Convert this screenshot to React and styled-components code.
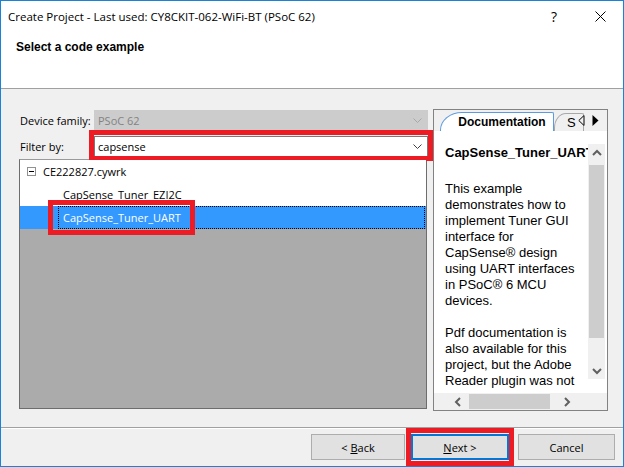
import React from 'react';
import styled, { createGlobalStyle } from 'styled-components';

const GlobalStyle = createGlobalStyle`
  html, body {
    margin: 0;
    padding: 0;
    background: #ffffff;
  }
  body {
    font-family: "Open Sans", "Noto Sans", sans-serif;
    font-size: 11px;
    color: #000;
  }
  * {
    box-sizing: border-box;
  }
`;

const RED = '#ed1c24';

// --- window chrome ---

const Window = styled.div`
  width: 624px;
  height: 467px;
  border: 1px solid #1883d7;
  display: flex;
  flex-direction: column;
  background: #f0f0f0;
  overflow: hidden;
`;

const TitleBar = styled.div`
  height: 30px;
  flex: none;
  background: #fff;
  display: flex;
  align-items: center;
  padding-left: 7px;
`;

const TitleText = styled.div`
  flex: 1;
  font-size: 11.5px;
  white-space: nowrap;
`;

const CaptionButton = styled.div`
  width: 46px;
  height: 30px;
  display: flex;
  align-items: center;
  justify-content: center;
  font-size: 14px;
`;

const Header = styled.div`
  height: 58px;
  flex: none;
  background: #fff;
  border-bottom: 1px solid #a0a0a0;
  padding: 8px 0 0 15px;
`;

const HeaderTitle = styled.div`
  font-family: "Liberation Sans", Arial, sans-serif;
  font-weight: bold;
  font-size: 12px;
  line-height: 16px;
`;

const Body = styled.div`
  height: 338px;
  flex: none;
  display: flex;
  padding: 20px 0 0 18px;
`;

// --- left column ---

const LeftColumn = styled.div`
  width: 414px;
  display: flex;
  flex-direction: column;
`;

const FieldRow = styled.div`
  display: flex;
  align-items: center;
  height: 21px;
  margin-top: ${p => p.$top}px;
`;

const FieldLabel = styled.div`
  width: 75px;
  padding-left: 1px;
  white-space: nowrap;
`;

const Combo = styled.div`
  position: relative;
  width: 334px;
  height: 21px;
  display: flex;
  align-items: center;
  padding: 0 0 0 3px;
  background: ${p => (p.$disabled ? '#cccccc' : '#ffffff')};
  border: 1px solid ${p => (p.$disabled ? '#cccccc' : '#7a7a7a')};
  color: ${p => (p.$disabled ? '#838383' : '#000')};
`;

const ComboValue = styled.span`
  flex: 1;
`;

const ComboArrow = styled.svg`
  width: 9px;
  height: 5px;
  margin-right: 5px;
`;

const Highlight = styled.div`
  position: absolute;
  top: ${p => p.$t}px;
  left: ${p => p.$l}px;
  right: ${p => p.$r}px;
  bottom: ${p => p.$b}px;
  border: 5px solid ${RED};
  pointer-events: none;
`;

const Tree = styled.div`
  margin-top: 2px;
  width: 408px;
  height: 250px;
  background: #ababab;
  border: 1px solid #6d6d6d;
  border-top-color: #9a9a9a;
`;

const TreeRow = styled.div`
  position: relative;
  height: 23px;
  display: flex;
  align-items: center;
  background: ${p => (p.$selected ? '#3399ff' : '#ffffff')};
  color: ${p => (p.$selected ? '#ffffff' : '#000')};
`;

const Expander = styled.span`
  width: 9px;
  height: 9px;
  margin: 0 7px 0 7px;
  border: 1px solid #919191;
  display: flex;
  align-items: center;
  justify-content: center;

  &::after {
    content: '';
    width: 5px;
    height: 1px;
    background: #000;
  }
`;

const NodeLabel = styled.span`
  margin-left: ${p => p.$indent}px;
  white-space: nowrap;
`;

const FocusLabel = styled.span`
  flex: 1;
  align-self: stretch;
  margin: 0 1px 0 38px;
  padding-left: 4px;
  display: flex;
  align-items: center;
  border: 1px dotted #000;
  white-space: nowrap;
`;

// --- right panel ---

const DocPanel = styled.div`
  width: 175px;
  height: 302px;
  border: 1px solid #828282;
  display: flex;
  flex-direction: column;
  background: #f0f0f0;
  overflow: hidden;
`;

const TabStrip = styled.div`
  position: relative;
  height: 21px;
  flex: none;
  display: flex;
  align-items: flex-end;
  padding-left: 6px;
`;

const Tab = styled.div`
  height: ${p => (p.$active ? 19 : 18)}px;
  width: ${p => p.$w}px;
  flex: none;
  display: flex;
  align-items: center;
  justify-content: ${p => (p.$active ? 'center' : 'flex-start')};
  padding-left: ${p => (p.$active ? 10 : 12)}px;
  background: ${p => (p.$active ? '#ffffff' : '#f0f0f0')};
  border: 1px solid ${p => (p.$active ? '#5d9be0' : '#a8a8a8')};
  border-bottom: none;
  border-top-left-radius: ${p => (p.$active ? '22px 18px' : '12px 15px')};
  border-top-right-radius: 2px;
  font-family: "Liberation Sans", Arial, sans-serif;
  font-weight: ${p => (p.$active ? 'bold' : 'normal')};
  font-size: ${p => (p.$active ? 12 : 13)}px;
  overflow: hidden;
  white-space: nowrap;
`;

const TabScroller = styled.div`
  position: absolute;
  right: 8px;
  top: 5px;
  display: flex;
  gap: 7px;
  background: #f0f0f0;
  padding-left: 2px;
`;

const DocArea = styled.div`
  height: 262px;
  flex: none;
  display: flex;
  background: #fff;
  overflow: hidden;
`;

const DocText = styled.div`
  width: 154px;
  height: 262px;
  overflow: hidden;
  padding: 14px 0 0 11px;
  font-family: "Liberation Sans", Arial, sans-serif;
  font-size: 13px;
  line-height: 16px;
  white-space: nowrap;
`;

const DocTitle = styled.div`
  font-weight: bold;
  margin-bottom: 20px;
`;

const DocPara = styled.p`
  margin: 0 0 16px;
`;

const VScroll = styled.div`
  width: 17px;
  margin-top: 13px;
  margin-bottom: 14px;
  display: flex;
  flex-direction: column;
  background: #f0f0f0;
`;

const ScrollButton = styled.div`
  width: 17px;
  height: 17px;
  flex: none;
  display: flex;
  align-items: center;
  justify-content: center;
`;

const VTrack = styled.div`
  flex: 1;
  padding-top: 4px;
`;

const VThumb = styled.div`
  height: 173px;
  margin: 0 1px;
  background: #cdcdcd;
`;

const HScroll = styled.div`
  height: 17px;
  flex: none;
  display: flex;
  padding-left: 15px;
  background: #f0f0f0;
`;

const HTrack = styled.div`
  width: 92px;
  padding: 1px 0 1px 3px;
`;

const HThumb = styled.div`
  width: 81px;
  height: 100%;
  background: #cdcdcd;
`;

// --- footer ---

const Footer = styled.div`
  flex: 1;
  border-top: 1px solid #a0a0a0;
  box-shadow: inset 0 1px 0 #ffffff;
  display: flex;
  justify-content: flex-end;
  align-items: flex-start;
  padding: 6px 8px 0 0;
  gap: 6px;
`;

const ButtonWrap = styled.div`
  position: relative;
  margin-left: ${p => p.$ml || 0}px;
`;

const Button = styled.div`
  width: ${p => p.$w}px;
  height: 26px;
  display: flex;
  align-items: center;
  justify-content: center;
  background: #e1e1e1;
  border: 1px solid ${p => (p.$primary ? '#0078d7' : '#adadad')};
  box-shadow: ${p => (p.$primary ? 'inset 0 0 0 1px #0078d7' : 'none')};
  white-space: pre;

  u {
    text-decoration: underline;
  }
`;

const Chevron = ({ dir, color = '#606060' }) => {
  const pts = {
    up: '1,6 5,2 9,6',
    down: '1,2 5,6 9,2',
    left: '6,1 2,5 6,9',
    right: '2,1 6,5 2,9',
  }[dir];
  const vertical = dir === 'up' || dir === 'down';
  return (
    <svg width={vertical ? 10 : 8} height={vertical ? 8 : 10} viewBox={vertical ? '0 0 10 8' : '0 0 8 10'}>
      <polyline points={pts} fill="none" stroke={color} strokeWidth="2" />
    </svg>
  );
};

const ComboChevron = ({ color }) => (
  <ComboArrow viewBox="0 0 9 5">
    <polyline points="0.5,0.5 4.5,4.5 8.5,0.5" fill="none" stroke={color} strokeWidth="1" />
  </ComboArrow>
);

export default function App() {
  return (
    <>
      <GlobalStyle />
      <Window>
        <TitleBar>
          <TitleText>Create Project - Last used: CY8CKIT-062-WiFi-BT (PSoC 62)</TitleText>
          <CaptionButton>?</CaptionButton>
          <CaptionButton>
            <svg width="11" height="11" viewBox="0 0 11 11">
              <path d="M0.5 0.5 L10.5 10.5 M10.5 0.5 L0.5 10.5" stroke="#000" strokeWidth="1" />
            </svg>
          </CaptionButton>
        </TitleBar>

        <Header>
          <HeaderTitle>Select a code example</HeaderTitle>
        </Header>

        <Body>
          <LeftColumn>
            <FieldRow $top={1}>
              <FieldLabel>Device family:</FieldLabel>
              <Combo $disabled>
                <ComboValue>PSoC 62</ComboValue>
                <ComboChevron color="#a8a8a8" />
              </Combo>
            </FieldRow>
            <FieldRow $top={5}>
              <FieldLabel>Filter by:</FieldLabel>
              <Combo>
                <ComboValue>capsense</ComboValue>
                <ComboChevron color="#404040" />
                <Highlight $t={-7} $l={-6} $r={-6} $b={-5} />
              </Combo>
            </FieldRow>
            <Tree>
              <TreeRow>
                <Expander />
                <NodeLabel $indent={0}>CE222827.cywrk</NodeLabel>
              </TreeRow>
              <TreeRow>
                <NodeLabel $indent={43}>CapSense_Tuner_EZI2C</NodeLabel>
              </TreeRow>
              <TreeRow $selected>
                <FocusLabel>CapSense_Tuner_UART</FocusLabel>
                <Highlight $t={-6} $l={28} $b={-6} style={{ width: 147 }} />
              </TreeRow>
            </Tree>
          </LeftColumn>

          <DocPanel>
            <TabStrip>
              <Tab $active $w={114}>Documentation</Tab>
              <Tab $w={30}>S</Tab>
              <TabScroller>
                <svg width="7" height="11" viewBox="0 0 7 11">
                  <polygon points="6,0.5 0.8,5.5 6,10.5" fill="none" stroke="#000" strokeWidth="1" />
                </svg>
                <svg width="7" height="11" viewBox="0 0 7 11">
                  <polygon points="0.5,0 6.5,5.5 0.5,11" fill="#000" />
                </svg>
              </TabScroller>
            </TabStrip>

            <DocArea>
              <DocText>
                <DocTitle>CapSense_Tuner_UART</DocTitle>
                <DocPara>
                  This example<br />
                  demonstrates how to<br />
                  implement Tuner GUI<br />
                  interface for<br />
                  CapSense® design<br />
                  using UART interfaces<br />
                  in PSoC® 6 MCU<br />
                  devices.
                </DocPara>
                <DocPara>
                  Pdf documentation is<br />
                  also available for this<br />
                  project, but the Adobe<br />
                  Reader plugin was not
                </DocPara>
              </DocText>
              <VScroll>
                <ScrollButton><Chevron dir="up" /></ScrollButton>
                <VTrack><VThumb /></VTrack>
                <ScrollButton><Chevron dir="down" /></ScrollButton>
              </VScroll>
            </DocArea>

            <HScroll>
              <ScrollButton><Chevron dir="left" /></ScrollButton>
              <HTrack><HThumb /></HTrack>
              <ScrollButton><Chevron dir="right" /></ScrollButton>
            </HScroll>
          </DocPanel>
        </Body>

        <Footer>
          <ButtonWrap>
            <Button $w={94}>{'< '}<u>B</u>ack</Button>
          </ButtonWrap>
          <ButtonWrap>
            <Button $w={98} $primary><u>N</u>ext {'>'}</Button>
            <Highlight $t={-6} $l={-5} $r={-5} $b={-6} />
          </ButtonWrap>
          <ButtonWrap $ml={3}>
            <Button $w={97}>Cancel</Button>
          </ButtonWrap>
        </Footer>
      </Window>
    </>
  );
}
